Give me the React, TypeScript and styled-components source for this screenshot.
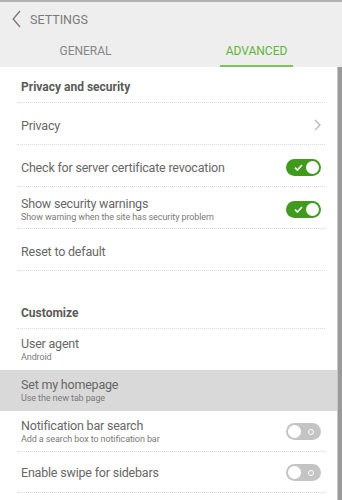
import React from "react";
import styled, { createGlobalStyle } from "styled-components";

const GlobalStyle = createGlobalStyle`
  html, body {
    margin: 0;
    padding: 0;
    background: #ffffff;
  }
  body {
    font-family: Roboto, "Liberation Sans", sans-serif;
  }
`;

const Screen = styled.div`
  width: 342px;
  height: 500px;
  overflow: hidden;
  display: flex;
  flex-direction: column;
`;

const Header = styled.div`
  background: #eeeeee;
  border-top: 2px solid #b3b3b3;
  height: 65px;
  display: flex;
  flex-direction: column;
`;

const TitleBar = styled.div`
  display: flex;
  align-items: center;
  height: 34px;
  padding-left: 12px;
  gap: 9px;
`;

const Title = styled.span`
  font-size: 12.5px;
  color: #7a7a7a;
`;

const Tabs = styled.div`
  display: flex;
  height: 31px;
`;

const Tab = styled.div`
  flex: 1;
  display: flex;
  justify-content: center;
  align-items: stretch;
`;

const TabLabel = styled.span<{ $active?: boolean }>`
  display: flex;
  align-items: center;
  padding: 0 6px;
  font-size: 12px;
  color: ${(p) => (p.$active ? "#5db536" : "#878787")};
  border-bottom: 2px solid ${(p) => (p.$active ? "#7cc35a" : "transparent")};
`;

const Body = styled.div`
  flex: 1;
  display: flex;
`;

const Content = styled.div`
  flex: 1;
  background: #ffffff;
  display: flex;
  flex-direction: column;
`;

const Scrollbar = styled.div`
  width: 4px;
  background: #9a9a9a;
  border-left: 1px solid #c8c8c8;
`;

const SectionHeader = styled.div`
  margin: 0 12px 0 17px;
  padding: 13px 4px 0;
  height: 36px;
  box-sizing: border-box;
  font-size: 12px;
  font-weight: bold;
  color: #5a5a5a;
  border-bottom: 1px dotted #dcdcdc;
`;

const Row = styled.div<{ $highlight?: boolean }>`
  background: ${(p) => (p.$highlight ? "#d9d9d9" : "transparent")};
  padding: 0 12px 0 17px;
`;

const RowInner = styled.div<{ $noLine?: boolean; $h: number }>`
  height: ${(p) => p.$h}px;
  box-sizing: border-box;
  display: flex;
  align-items: center;
  padding: ${(p) => (p.$h > 41 ? 3 : 1)}px 4px 0;
  border-bottom: 1px dotted ${(p) => (p.$noLine ? "transparent" : "#dcdcdc")};
`;

const Texts = styled.div`
  flex: 1;
  display: flex;
  flex-direction: column;
`;

const Label = styled.span`
  font-size: 12.5px;
  letter-spacing: -0.2px;
  color: #676767;
  line-height: 15px;
`;

const Sub = styled.span`
  font-size: 9px;
  letter-spacing: -0.1px;
  color: #7a7a7a;
  line-height: 12px;
`;

const Gap = styled.div`
  height: 22px;
`;

const Toggle = styled.div<{ $on?: boolean }>`
  width: 35px;
  height: 17px;
  border-radius: 9px;
  background: ${(p) => (p.$on ? "#3f9a1d" : "#c4c4c4")};
  display: flex;
  align-items: center;
  justify-content: space-between;
  flex-direction: ${(p) => (p.$on ? "row" : "row-reverse")};
  padding: ${(p) => (p.$on ? "0 2px 0 8px" : "0 7px 0 2px")};
  box-sizing: border-box;
`;

const Knob = styled.div`
  width: 13px;
  height: 13px;
  border-radius: 50%;
  background: #ffffff;
`;

const Ring = styled.div`
  width: 6px;
  height: 6px;
  border-radius: 50%;
  border: 1.3px solid #ffffff;
  box-sizing: border-box;
`;

const Check = () => (
  <svg width="9" height="7" viewBox="0 0 9 7">
    <path d="M1 3.6 L3.4 6 L8 1" fill="none" stroke="#fff" strokeWidth="1.6" />
  </svg>
);

const Switch = ({ on }: { on?: boolean }) => (
  <Toggle $on={on}>
    {on ? <Check /> : <Ring />}
    <Knob />
  </Toggle>
);

const Chevron = () => (
  <svg width="7" height="12" viewBox="0 0 7 12">
    <path d="M1 1 L6 6 L1 11" fill="none" stroke="#b5b5b5" strokeWidth="1.2" />
  </svg>
);

const Back = () => (
  <svg width="9" height="18" viewBox="0 0 9 18">
    <path d="M8 1 L1.2 9 L8 17" fill="none" stroke="#777" strokeWidth="1.3" />
  </svg>
);

type Item = { label: string; sub?: string; toggle?: boolean; chevron?: boolean; highlight?: boolean; noLine?: boolean };

const privacy: Item[] = [
  { label: "Privacy", chevron: true },
  { label: "Check for server certificate revocation", toggle: true },
  { label: "Show security warnings", sub: "Show warning when the site has security problem", toggle: true },
  { label: "Reset to default" },
];

const customize: Item[] = [
  { label: "User agent", sub: "Android", noLine: true },
  { label: "Set my homepage", sub: "Use the new tab page", highlight: true, noLine: true },
  { label: "Notification bar search", sub: "Add a search box to notification bar", toggle: false },
  { label: "Enable swipe for sidebars", toggle: false },
];

const SettingRow = ({ item, h }: { item: Item; h: number }) => (
  <Row $highlight={item.highlight}>
    <RowInner $noLine={item.noLine} $h={h}>
      <Texts>
        <Label>{item.label}</Label>
        {item.sub && <Sub>{item.sub}</Sub>}
      </Texts>
      {item.chevron && <Chevron />}
      {item.toggle !== undefined && <Switch on={item.toggle} />}
    </RowInner>
  </Row>
);

export default function App() {
  return (
    <Screen>
      <GlobalStyle />
      <Header>
        <TitleBar>
          <Back />
          <Title>SETTINGS</Title>
        </TitleBar>
        <Tabs>
          <Tab>
            <TabLabel>GENERAL</TabLabel>
          </Tab>
          <Tab>
            <TabLabel $active>ADVANCED</TabLabel>
          </Tab>
        </Tabs>
      </Header>
      <Body>
        <Content>
          <SectionHeader>Privacy and security</SectionHeader>
          {privacy.map((it) => (
            <SettingRow key={it.label} item={it} h={42} />
          ))}
          <Gap />
          <SectionHeader>Customize</SectionHeader>
          {customize.map((it) => (
            <SettingRow key={it.label} item={it} h={41} />
          ))}
        </Content>
        <Scrollbar />
      </Body>
    </Screen>
  );
}
